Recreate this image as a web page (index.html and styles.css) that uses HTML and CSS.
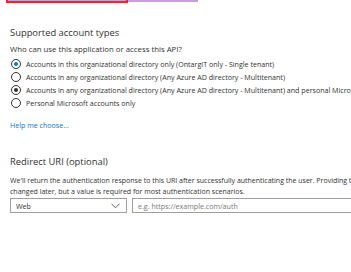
FILE: index.html
```html
<!DOCTYPE html>
<html>
<head>
  <title>Register an application</title>
  <link rel="stylesheet" href="styles.css">
</head>
<body>
  <div class="topstrip">
    <div class="tab-mark"></div>
    <div class="tab-line"></div>
  </div>

  <section class="block">
    <h2>Supported account types</h2>
    <p class="question">Who can use this application or access this API?</p>
    <label class="radio"><span class="dot selected"></span>Accounts in this organizational directory only (OntargIT only - Single tenant)</label>
    <label class="radio"><span class="dot"></span>Accounts in any organizational directory (Any Azure AD directory - Multitenant)</label>
    <label class="radio"><span class="dot checked"></span>Accounts in any organizational directory (Any Azure AD directory - Multitenant) and personal Microsoft accounts (e.g. Skype, Xbox)</label>
    <label class="radio"><span class="dot"></span>Personal Microsoft accounts only</label>
    <a class="help" href="#">Help me choose...</a>
  </section>

  <section class="block redirect">
    <h2>Redirect URI (optional)</h2>
    <p class="desc">We'll return the authentication response to this URI after successfully authenticating the user. Providing this now is optional and it can be<br>changed later, but a value is required for most authentication scenarios.</p>
    <div class="uri-row">
      <div class="select">
        <span>Web</span>
        <svg width="9" height="6" viewBox="0 0 9 6"><path d="M0.5 0.8 L4.5 4.8 L8.5 0.8" fill="none" stroke="#605e5c" stroke-width="1"/></svg>
      </div>
      <div class="uri-input">e.g. https://example.com/auth</div>
    </div>
  </section>
</body>
</html>
```

FILE: styles.css
```css
body {
  margin: 0;
  font-family: "Open Sans", "Noto Sans", sans-serif;
  background-color: white;
  color: #323130;
  width: 351px;
  height: 272px;
  overflow: hidden;
}
.topstrip {
  display: flex;
  align-items: flex-start;
  height: 20px;
  padding-left: 6px;
}
.tab-mark {
  width: 118px;
  height: 1px;
  background-color: #c9a0dc;
  border: 2px solid #ff2020;
  border-top: none;
}
.tab-line {
  width: 70px;
  height: 2px;
  background-color: #c9a0dc;
}
.block {
  padding-left: 10px;
  white-space: nowrap;
}
h2 {
  font-size: 9.4px;
  font-weight: normal;
  margin: 6px 0 5px 0;
}
.question {
  font-size: 7.8px;
  margin: 0 0 3px 0;
}
.radio {
  display: flex;
  align-items: center;
  height: 13px;
  font-size: 7.1px;
}
.dot {
  width: 8px;
  height: 8px;
  border: 1px solid #323130;
  border-radius: 50%;
  margin: 0 5px 0 1px;
  display: flex;
  align-items: center;
  justify-content: center;
  flex-shrink: 0;
}
.dot.selected::after,
.dot.checked::after {
  content: "";
  width: 4px;
  height: 4px;
  border-radius: 50%;
  background-color: #0078d4;
}
.dot.checked::after {
  background-color: #323130;
}
.help {
  display: block;
  margin-top: 11px;
  font-size: 7.1px;
  color: #0078d4;
  text-decoration: none;
}
.redirect {
  margin-top: 25px;
}
.redirect h2 {
  margin-bottom: 7px;
}
.desc {
  font-size: 7px;
  line-height: 11px;
  margin: 0;
}
.uri-row {
  display: flex;
  gap: 5px;
  margin-top: 1px;
}
.select {
  width: 104px;
  height: 13px;
  border: 1px solid #a19f9d;
  display: flex;
  align-items: center;
  justify-content: space-between;
  padding: 0 6px 0 5px;
  font-size: 7.1px;
  flex-shrink: 0;
}
.uri-input {
  width: 260px;
  height: 13px;
  border: 1px solid #a19f9d;
  display: flex;
  align-items: center;
  padding-left: 5px;
  font-size: 7.1px;
  color: #797775;
  flex-shrink: 0;
}
```
